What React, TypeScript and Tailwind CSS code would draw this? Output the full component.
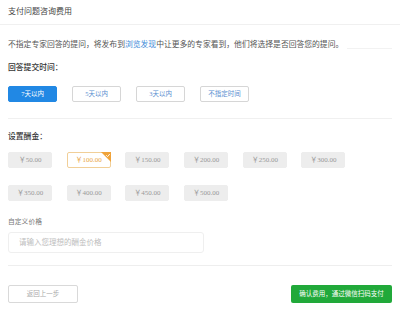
import { useState } from 'react'
import { clsx } from 'clsx'

const times = ['7天以内', '5天以内', '3天以内', '不指定时间']
const prices = [50, 100, 150, 200, 250, 300, 350, 400, 450, 500]

function CornerCheck() {
  return (
    <svg className="absolute -top-px -right-px" width="10" height="10" viewBox="0 0 10 10">
      <path d="M0 0H10V10Z" fill="#f0a33a" />
      <path d="M5.2 3.2L6.6 4.6L8.8 2" stroke="#fff" strokeWidth="0.9" fill="none" />
    </svg>
  )
}

export default function App() {
  const [time, setTime] = useState(0)
  const [price, setPrice] = useState(100)

  return (
    <div
      className="w-[400px] h-[326px] bg-white text-[#333] overflow-hidden"
      style={{ fontFamily: '"Liberation Serif", "Noto Sans CJK SC", serif' }}
    >
      <div className="h-[25px] px-2 flex items-center border-b border-[#f0f0f0] text-[8px] text-[#444]">
        支付问题咨询费用
      </div>

      <div className="px-2">
        <div className="mt-[15px] flex items-end">
          <p className="text-[7.8px] leading-[10px] text-[#555] whitespace-nowrap">
            不指定专家回答的提问，将发布到<span className="text-[#3d8ad8]">浏览发现</span>
            中让更多的专家看到，他们将选择是否回答您的提问。
          </p>
          <div className="flex-1 ml-1 mb-[1px] border-b border-[#f2f2f2]" />
        </div>

        <div className="mt-[13px] text-[7.8px] leading-[10px] text-[#333] font-medium">回答提交时间：</div>

        <div className="mt-[13px] flex gap-[15px]">
          {times.map((t, i) => (
            <button
              key={t}
              onClick={() => setTime(i)}
              className={clsx(
                'w-[49px] h-[16px] rounded-[2px] border text-[6.5px] flex items-center justify-center',
                time === i
                  ? 'bg-[#2188e4] border-[#2188e4] text-white'
                  : 'bg-white border-[#d6d6d6] text-[#5b8fd0]'
              )}
            >
              {t}
            </button>
          ))}
        </div>

        <div className="mt-[16px] border-b border-[#f0f0f0]" />

        <div className="mt-[13px] text-[7.8px] leading-[10px] text-[#333] font-medium">设置酬金：</div>

        <div className="mt-[10px] grid grid-cols-[repeat(6,44px)] gap-x-[14.7px] gap-y-[17px]">
          {prices.map(p => (
            <button
              key={p}
              onClick={() => setPrice(p)}
              className={clsx(
                'relative w-[44px] h-[16px] rounded-[2px] text-[7px] flex items-center justify-center border',
                price === p
                  ? 'bg-white border-[#f1cf98] text-[#e9a646]'
                  : 'bg-[#ededed] border-[#ededed] text-[#999]'
              )}
            >
              ￥{p.toFixed(2)}
              {price === p && <CornerCheck />}
            </button>
          ))}
        </div>

        <div className="mt-[16px] text-[6.8px] leading-[9px] text-[#777]">自定义价格</div>

        <input
          className="mt-[6px] w-[196px] h-[21px] border border-[#efefef] rounded-[3px] px-[10px] text-[7.5px] outline-none placeholder:text-[#bdbdbd]"
          placeholder="请输入您理想的酬金价格"
        />

        <div className="mt-[12px] border-b border-[#eeeeee]" />

        <div className="mt-[19px] flex justify-between items-center">
          <button className="w-[70px] h-[18px] border border-[#d9d9d9] rounded-[2px] text-[6.5px] text-[#aaa] bg-white">
            返回上一步
          </button>
          <button className="w-[101px] h-[18px] rounded-[2px] bg-[#21a93a] text-white text-[6.5px]">
            确认费用，通过微信扫码支付
          </button>
        </div>
      </div>
    </div>
  )
}
